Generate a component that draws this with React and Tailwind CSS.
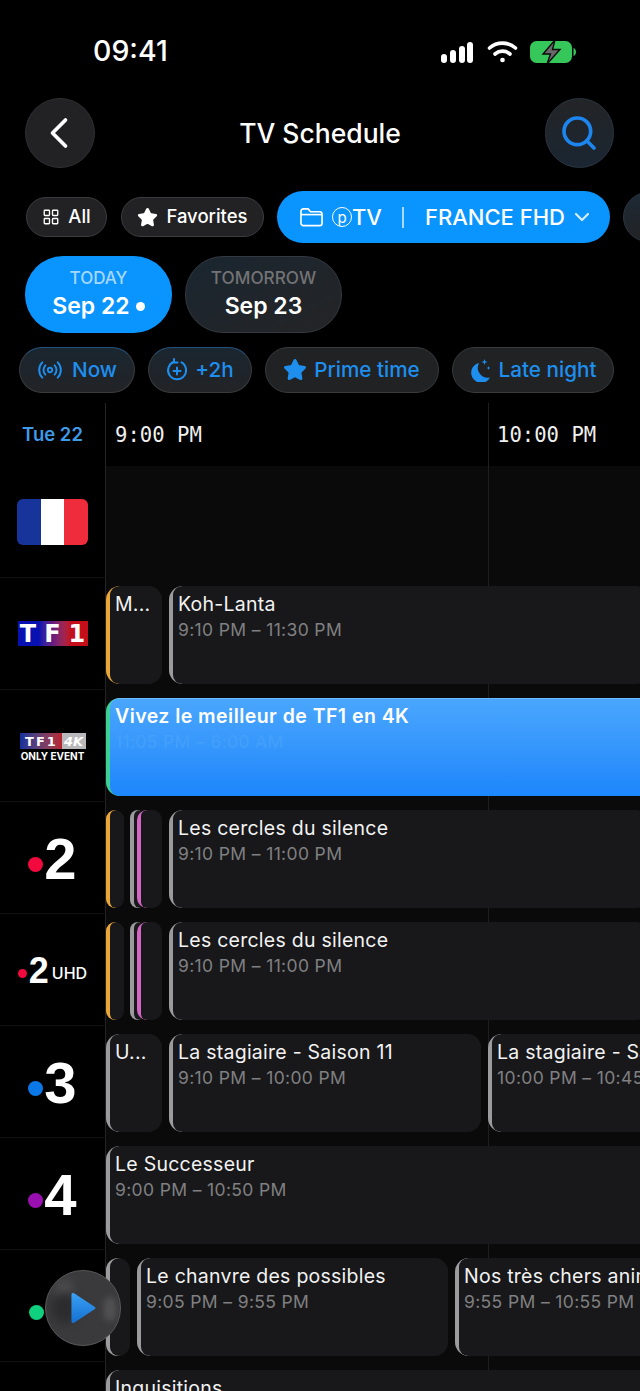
import { ChevronDown, ChevronLeft, LayoutGrid, Radio, Search, Star } from 'lucide-react'

const sans = 'font-["Inter","Liberation_Sans",sans-serif]'
const pillClass =
  'flex h-[46px] shrink-0 items-center justify-center gap-[7px] rounded-full border border-[#3a3b3d] bg-[#212224] text-[20.7px] font-medium text-[#1e8fee]'
const smallPillClass =
  'flex h-10 shrink-0 items-center justify-center gap-[8px] rounded-full border border-[#3c3c3e] bg-[#222224] text-[18.5px] font-medium text-white'

const Row = ({ logo, children, last }) => (
  <div className="flex h-[112px] shrink-0">
    <div className={`flex w-[106px] shrink-0 items-center justify-center border-r border-[#232325] ${last ? '' : 'border-b border-b-[#101114]'}`}>
      {logo}
    </div>
    <div className="relative flex flex-1 gap-[7px] overflow-hidden bg-[#0a0a0b] pt-2">
      <div className="absolute top-0 bottom-0 left-[382px] w-px bg-[#1f1f21]" />
      {children}
    </div>
  </div>
)

const Card = ({ title, time, width, accent = 'bg-[#9b9b9d]' }) => (
  <div className="relative h-[98px] shrink-0 overflow-hidden rounded-[14px] bg-[#18181a]" style={{ width }}>
    <div className={`absolute top-0 bottom-0 left-0 w-[14px] ${accent}`} />
    <div className="relative ml-[4px] h-full rounded-l-[9px] bg-[#18181a] pt-[5px] pl-[5px]">
      {title && <p className="text-[19.5px] leading-[26px] tracking-[0.25px] whitespace-nowrap text-[#f2f2f2]">{title}</p>}
      {time && <p className="mt-[1px] text-[17.5px] leading-[24px] tracking-[0.36px] whitespace-nowrap text-[#808082]">{time}</p>}
    </div>
  </div>
)

const ChannelNumber = ({ dot, value, small }) => (
  <div className="flex items-center">
    <span className={`rounded-full ${small ? 'mt-[8px] h-[9px] w-[9px]' : 'mt-[14px] h-[15px] w-[15px]'}`} style={{ backgroundColor: dot }} />
    <span className={`font-["Liberation_Sans",sans-serif] font-bold text-white ${small ? 'mt-[2px] ml-[2px] text-[36px] leading-none' : 'mt-[2px] ml-[1px] text-[58px] leading-none'}`}>
      {value}
    </span>
    {small && <span className="mt-[6px] ml-[3px] text-[16px] font-medium text-white">UHD</span>}
  </div>
)

const Sliver = ({ accent, className }) => (
  <div className={`absolute top-0 bottom-0 overflow-hidden bg-[#18181a] ${className}`}>
    <div className={`absolute top-0 bottom-0 left-0 w-[10px] ${accent}`} />
    <div className="relative ml-[4px] h-full rounded-l-[6px] bg-[#18181a]" />
  </div>
)

const Narrow = () => (
  <div className="relative h-[98px] w-[56px] shrink-0">
    <Sliver accent="bg-[#e9a73a]" className="left-0 w-[18px] rounded-[9px]" />
    <Sliver accent="bg-[#9b9b9d]" className="left-[24px] w-[16px] rounded-[9px]" />
    <Sliver accent="bg-[#d465c4]" className="left-[31px] w-[25px] rounded-[10px]" />
  </div>
)

const StatusBar = () => (
  <div className="flex h-[98px] items-start justify-between pt-[33px] pr-[64px] pl-[93px]">
    <span className="text-[28.5px] leading-9 font-medium text-white">09:41</span>
    <div className="flex items-center pt-[7px]">
      <svg width="32" height="22" viewBox="0 0 32 22" fill="#fff">
        <rect x="0" y="13" width="6" height="9" rx="3" />
        <rect x="9" y="9" width="6" height="13" rx="3" />
        <rect x="18" y="5" width="6" height="17" rx="3" />
        <rect x="26" y="1" width="6" height="21" rx="3" />
      </svg>
      <svg width="31" height="23" viewBox="0 0 31 23" fill="none" stroke="#fff" strokeWidth="3.6" strokeLinecap="round" className="ml-[14px]">
        <path d="M2.500 8c7.500-6.500 18.500-6.500 26 0" />
        <path d="M8 14c4.500-3.800 10.500-3.800 15 0" />
        <circle cx="15.500" cy="20" r="1.600" fill="#fff" strokeWidth="1.500" />
      </svg>
      <svg width="46" height="22" viewBox="0 0 46 22" className="ml-[12px]">
        <rect x="0" y="0" width="42" height="22" rx="6.500" fill="#35c759" />
        <path d="M43.500 7c1.500.4 2.500 2 2.500 4s-1 3.600-2.500 4Z" fill="#35c759" />
        <path d="M25 -1 13 13H20.500L17 23 30 8.500H22.500Z" fill="#6a6a6c" stroke="#0b0b0b" strokeWidth="1.400" />
      </svg>
    </div>
  </div>
)

const App = () => (
  <div className={`relative h-[1391px] w-[640px] overflow-hidden bg-black ${sans}`}>
    <StatusBar />

    <header className="flex h-[70px] items-center justify-between pr-[26px] pl-[25px]">
      <button className="flex h-[70px] w-[70px] items-center justify-center rounded-full border border-[#303032] bg-[#222224]">
        <ChevronLeft size={52} strokeWidth={1.7} className="mr-[3px] text-white" />
      </button>
      <h1 className="mt-[2px] text-[26.5px] font-medium text-white">TV Schedule</h1>
      <button className="flex h-[70px] w-[69px] items-center justify-center rounded-full border border-[#2b3540] bg-linear-to-b from-[#232426] to-[#1a2632]">
        <Search size={40} strokeWidth={2.2} className="text-[#1c86ee]" />
      </button>
    </header>

    <div className="mt-[23px] flex h-[52px] items-center gap-[14px] overflow-hidden pl-[26px]">
      <div className={`${smallPillClass} w-[81px]`}>
        <LayoutGrid size={18} strokeWidth={1.8} />
        All
      </div>
      <div className={`${smallPillClass} w-[143px]`}>
        <Star size={21} fill="#fff" />
        Favorites
      </div>
      <div className="-ml-[1px] flex h-[52px] w-[333px] shrink-0 items-center rounded-full bg-[#0a94fd] pl-[23px] text-white">
        <svg width="23" height="20" viewBox="0 0 24 20" fill="none" stroke="#fff" strokeWidth="1.700">
          <path d="M1 4a2.500 2.500 0 0 1 2.500-2.500h5l2.500 3h9.500A2.500 2.500 0 0 1 23 7v9.500a2.500 2.500 0 0 1-2.500 2.500h-17A2.500 2.500 0 0 1 1 16.500Z" />
          <path d="M1 7.500h22" />
        </svg>
        <span className="ml-[9px] flex h-[20px] w-[20px] items-center justify-center rounded-full border border-white text-[15px] leading-none">p</span>
        <span className="text-[22px] font-medium">TV</span>
        <span className="ml-[20px] h-[21px] w-[2px] bg-[#a9d9ff]" />
        <span className="ml-[21px] text-[22px] font-medium whitespace-nowrap">FRANCE FHD</span>
        <ChevronDown size={24} strokeWidth={2.2} className="ml-[5px] text-[#d5ecff]" />
      </div>
      <div className="-ml-[1px] h-[50px] w-[50px] shrink-0 rounded-full border border-[#2b3540] bg-linear-to-b from-[#1c2a36] to-[#222224]" />
    </div>

    <div className="mt-[13px] flex h-[77px] gap-[13px] pl-[25px]">
      <div className="flex w-[147px] flex-col items-center justify-center rounded-[38px] bg-[#0a94fd] pb-[2px]">
        <span className="text-[17px] leading-[22px] font-medium text-[#a6d8ff]">TODAY</span>
        <span className="mt-[3px] flex items-center gap-[6px] text-[23px] leading-7 font-semibold text-white">
          Sep 22
          <span className="h-[9px] w-[9px] rounded-full bg-white" />
        </span>
      </div>
      <div className="flex w-[157px] flex-col items-center justify-center rounded-[38px] border border-[#34393f] bg-linear-to-br from-[#1a2630] to-[#242426] pb-[2px]">
        <span className="text-[17.2px] leading-[22px] font-medium text-[#737375]">TOMORROW</span>
        <span className="mt-[3px] text-[23px] leading-7 font-semibold text-white">Sep 23</span>
      </div>
    </div>

    <div className="mt-[14px] flex gap-[13px] pl-[19px]">
      <div className={`${pillClass} w-[116px] border-t-[#24527a] bg-linear-to-b from-[#1a2630] to-[#222326]`}>
        <Radio size={26} strokeWidth={1.800} />
        <span className="ml-[2px]">Now</span>
      </div>
      <div className={`${pillClass} w-[104px] border-t-[#24527a] bg-linear-to-b from-[#1a2630] to-[#222326]`}>
        <svg width="22" height="24" viewBox="0 0 22 24" fill="none" stroke="#1e8fee" strokeWidth="2" strokeLinecap="round">
          <path d="M8 3.800a9 9 0 1 0 7.500.6" />
          <path d="M8 1v3.500h3.500" />
          <path d="M11 9.500v7M7.500 13h7" />
        </svg>
        +2h
      </div>
      <div className={`${pillClass} w-[174px]`}>
        <Star size={24} fill="#1e8fee" className="-ml-[1px]" />
        Prime time
      </div>
      <div className={`${pillClass} w-[162px]`}>
        <svg width="22" height="24" viewBox="0 0 22 24" fill="#1e8fee">
          <path d="M9 5a10 10 0 0 0 11 14.500A10 10 0 1 1 9 5Z" />
          <path d="M14.500 1l.8 2.200 2.200.8-2.200.8-.8 2.200-.8-2.200-2.200-.8 2.200-.8ZM18.500 8l.6 1.400 1.400.6-1.400.6-.6 1.400-.6-1.400-1.400-.6 1.400-.6Z" />
        </svg>
        Late night
      </div>
    </div>

    <div className="mt-[10px] flex h-[63px]">
      <div className="flex w-[106px] shrink-0 items-start justify-center border-r border-[#232325] pt-[19px]">
        <span className="text-[18.500px] leading-[24px] font-semibold text-[#3f9be8]">Tue 22</span>
      </div>
      <div className="relative flex flex-1 pt-[18px] font-['DejaVu_Sans_Mono',monospace] text-[20.6px] leading-[28px] text-[#f0f0f0]">
        <span className="ml-[9px]">9:00 PM</span>
        <div className="absolute top-0 bottom-0 left-[382px] w-px bg-[#1f1f21]" />
        <span className="absolute left-[391px]">10:00 PM</span>
      </div>
    </div>

    <Row
      logo={
        <div className="flex h-[46px] w-[71px] overflow-hidden rounded-[6px]">
          <span className="flex-1 bg-[#17349a]" />
          <span className="flex-1 bg-white" />
          <span className="flex-1 bg-[#ee2c3c]" />
        </div>
      }
    />

    <Row
      logo={
        <div className="flex h-[25px] w-[70px] items-center justify-center gap-[8px] bg-linear-to-r from-[#0710b0] from-30% via-[#6a1a80] to-[#c40f1a] to-75% font-['DejaVu_Sans',sans-serif] text-[24px] leading-none font-bold text-white">
          <span>T</span>
          <span>F</span>
          <span>1</span>
        </div>
      }
    >
      <Card title="M..." width={56} accent="bg-[#e9a73a]" />
      <Card title="Koh-Lanta" time="9:10 PM – 11:30 PM" width={480} />
    </Row>

    <Row
      logo={
        <div className="mt-[4px] flex w-[66px] flex-col items-center">
          <div className="flex h-[16px] w-full items-center overflow-hidden font-['DejaVu_Sans',sans-serif] text-[13px] leading-none font-bold text-white">
            <span className="flex h-full w-[42px] items-center justify-center gap-[2px] bg-linear-to-r from-[#0e2f9c] to-[#b8232f]">
              <span>T</span>
              <span>F</span>
              <span>1</span>
            </span>
            <span className="flex h-full flex-1 items-center justify-center bg-[#b9b9bb] italic">4K</span>
          </div>
          <span className="mt-[2px] text-[10px] leading-[11px] font-bold whitespace-nowrap text-white">ONLY EVENT</span>
        </div>
      }
    >
      <div className="relative h-[98px] w-[560px] shrink-0 overflow-hidden rounded-[14px] bg-[#3ecf94]">
        <div className="ml-[4px] h-full rounded-l-[9px] border-t border-t-[#6bbcff] bg-linear-to-b from-[#4aa6fd] to-[#1c86fb] pt-[4px] pl-[5px]">
          <p className="text-[19.500px] leading-[26px] font-semibold tracking-[0.45px] whitespace-nowrap text-white">Vivez le meilleur de TF1 en 4K</p>
          <p className="mt-[1px] text-[17.5px] leading-[24px] tracking-[0.36px] whitespace-nowrap text-[#44a0fa]">11:05 PM – 6:00 AM</p>
        </div>
      </div>
    </Row>

    <Row logo={<ChannelNumber dot="#f2093d" value="2" />}>
      <Narrow />
      <Card title="Les cercles du silence" time="9:10 PM – 11:00 PM" width={480} />
    </Row>

    <Row logo={<ChannelNumber dot="#f2093d" value="2" small />}>
      <Narrow />
      <Card title="Les cercles du silence" time="9:10 PM – 11:00 PM" width={480} />
    </Row>

    <Row logo={<ChannelNumber dot="#0b78e8" value="3" />}>
      <Card title="U..." width={56} />
      <Card title="La stagiaire - Saison 11" time="9:10 PM – 10:00 PM" width={312} />
      <Card title="La stagiaire - Saison 11" time="10:00 PM – 10:45 PM" width={300} />
    </Row>

    <Row logo={<ChannelNumber dot="#9a0fb0" value="4" />}>
      <Card title="Le Successeur" time="9:00 PM – 10:50 PM" width={560} />
    </Row>

    <Row
      logo={
        <div className="flex items-center">
          <span className="mt-[14px] h-[15px] w-[15px] rounded-full bg-[#0fd07f]" />
          <span className="ml-[1px] w-[32px]" />
        </div>
      }
    >
      <Card width={24} />
      <Card title="Le chanvre des possibles" time="9:05 PM – 9:55 PM" width={311} />
      <Card title="Nos très chers animaux" time="9:55 PM – 10:55 PM" width={300} />
    </Row>

    <Row last>
      <Card title="Inquisitions" width={560} />
    </Row>

    <button className="absolute top-[1270px] left-[45px] flex h-[76px] w-[76px] items-center justify-center overflow-hidden rounded-full border border-[#59595b] bg-[#3a3a3c]">
      <span className="absolute top-[8px] left-[8px] h-[20px] w-[20px] rounded-full bg-[#4c4c4e] blur-[4px]" />
      <span className="absolute top-[26px] right-[4px] h-[24px] w-[12px] rounded-full bg-[#525254] blur-[3px]" />
      <span className="absolute top-[22px] left-[6px] h-[30px] w-[26px] rounded-full bg-[#2c2c2e] blur-[5px]" />
      <svg width="28" height="32" viewBox="0 0 30 36" className="relative mr-[1px]">
        <defs>
          <linearGradient id="play" x1="0" y1="0" x2="0" y2="1">
            <stop offset="0" stopColor="#3aa0f5" />
            <stop offset="1" stopColor="#1470d0" />
          </linearGradient>
        </defs>
        <path d="M2 3c0-2 1.500-2.500 3-1.500l23 15c1.300.8 1.300 2.200 0 3l-23 15c-1.500 1-3 .5-3-1.500Z" fill="url(#play)" />
      </svg>
    </button>
  </div>
)

export default App
